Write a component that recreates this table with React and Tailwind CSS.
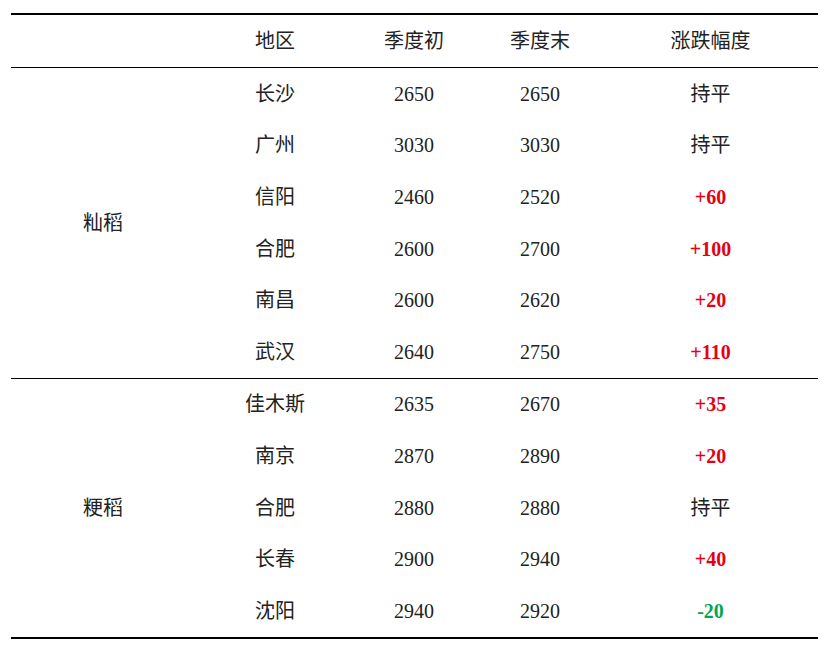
import React from 'react';

const groups = [
  {
    name: '籼稻',
    rows: [
      ['长沙', '2650', '2650', '持平'],
      ['广州', '3030', '3030', '持平'],
      ['信阳', '2460', '2520', '+60'],
      ['合肥', '2600', '2700', '+100'],
      ['南昌', '2600', '2620', '+20'],
      ['武汉', '2640', '2750', '+110'],
    ],
  },
  {
    name: '粳稻',
    rows: [
      ['佳木斯', '2635', '2670', '+35'],
      ['南京', '2870', '2890', '+20'],
      ['合肥', '2880', '2880', '持平'],
      ['长春', '2900', '2940', '+40'],
      ['沈阳', '2940', '2920', '-20'],
    ],
  },
];

// Colour of the change column: red for rises, green for falls, plain for flat.
function changeClass(v) {
  if (v.startsWith('+')) return 'text-[#e60012] font-bold';
  if (v.startsWith('-')) return 'text-[#00a651] font-bold';
  return 'text-[#222]';
}

export default function App() {
  return (
    <div
      className="w-[836px] h-[648px] bg-white pt-[13px] pl-[11px] text-[20px] text-[#222]"
      style={{ fontFamily: '"Liberation Serif", "Noto Sans CJK SC", serif' }}
    >
      <div className="w-[807px] border-t-2 border-b-2 border-black">
        {/* Header */}
        <div className="grid grid-cols-[184px_160px_118px_134px_207px] h-[53px] items-center border-b border-black text-center">
          <div />
          <div>地区</div>
          <div>季度初</div>
          <div>季度末</div>
          <div>涨跌幅度</div>
        </div>

        {groups.map((g, gi) => (
          <div key={g.name} className={`flex ${gi > 0 ? 'border-t border-black' : ''}`}>
            <div className="w-[184px] flex items-center justify-center">{g.name}</div>
            <div className="flex-1">
              {g.rows.map((r, i) => (
                <div
                  key={i}
                  className="grid grid-cols-[160px_118px_134px_207px] h-[51.6px] items-center text-center"
                >
                  <div>{r[0]}</div>
                  <div>{r[1]}</div>
                  <div>{r[2]}</div>
                  <div className={changeClass(r[3])}>{r[3]}</div>
                </div>
              ))}
            </div>
          </div>
        ))}
      </div>
    </div>
  );
}
